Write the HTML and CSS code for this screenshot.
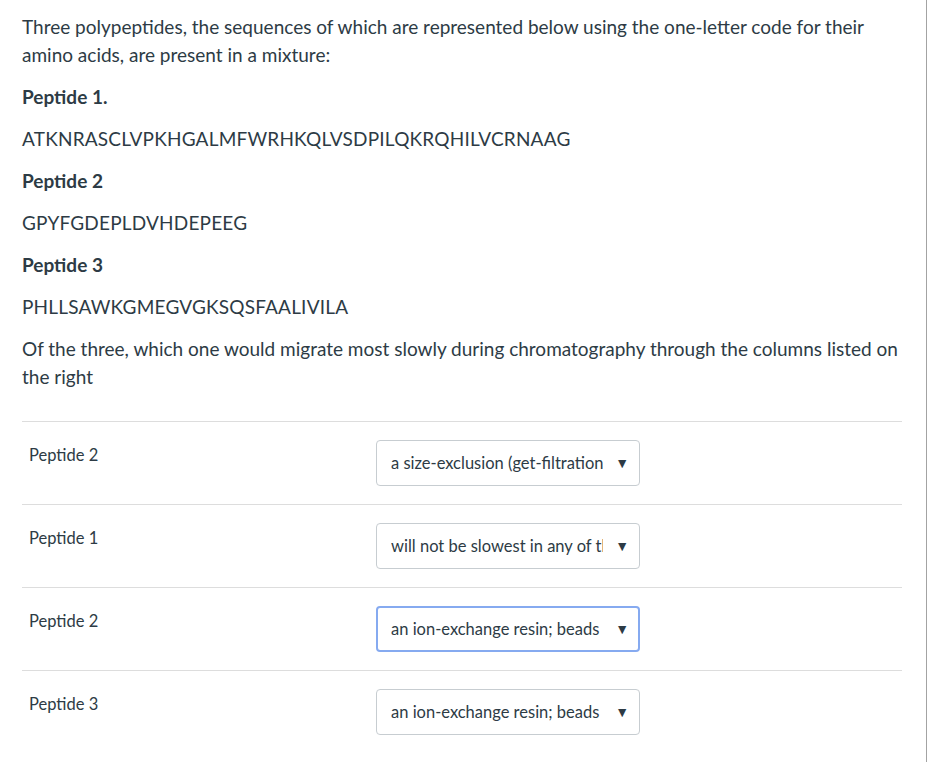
FILE: index.html
```html
<!DOCTYPE html>
<html>
<head>
<meta charset="utf-8">
<link rel="stylesheet" href="styles.css">
</head>
<body>
<div class="frame">
  <div class="content">
    <p>Three polypeptides, the sequences of which are represented below using the one-letter code for their amino acids, are present in a mixture:</p>
    <p class="bold">Peptide 1.</p>
    <p class="seq">ATKNRASCLVPKHGALMFWRHKQLVSDPILQKRQHILVCRNAAG</p>
    <p class="bold">Peptide 2</p>
    <p class="seq">GPYFGDEPLDVHDEPEEG</p>
    <p class="bold">Peptide 3</p>
    <p class="seq">PHLLSAWKGMEGVGKSQSFAALIVILA</p>
    <p>Of the three, which one would migrate most slowly during chromatography through the columns listed on the right</p>
    <div class="matches">
      <div class="row">
        <div class="label">Peptide 2</div>
        <div class="select"><span class="sel-text">a size-exclusion (get-filtration) column; beads</span><span class="arrow">▼</span></div>
      </div>
      <div class="row">
        <div class="label">Peptide 1</div>
        <div class="select"><span class="sel-text">will not be slowest in any of these columns</span><span class="arrow">▼</span></div>
      </div>
      <div class="row">
        <div class="label">Peptide 2</div>
        <div class="select focused"><span class="sel-text">an ion-exchange resin; beads</span><span class="arrow">▼</span></div>
      </div>
      <div class="row">
        <div class="label">Peptide 3</div>
        <div class="select"><span class="sel-text">an ion-exchange resin; beads</span><span class="arrow">▼</span></div>
      </div>
    </div>
  </div>
</div>
</body>
</html>
```

FILE: styles.css
```css
html, body {
  margin: 0;
  padding: 0;
  background: #fff;
}
body {
  font-family: Lato, "Open Sans", sans-serif;
  color: #2d3b45;
}
.frame {
  width: 927px;
  height: 762px;
  box-sizing: border-box;
  border-right: 1px solid #a3a3a3;
  overflow: hidden;
}
.content {
  width: 880px;
  padding: 13px 0 0 22px;
}
p {
  margin: 0 0 14px;
  font-size: 19px;
  line-height: 28px;
}
.seq {
  letter-spacing: 0.2px;
}
.bold {
  font-weight: 700;
}
.matches {
  margin-top: 30px;
}
.row {
  display: grid;
  grid-template-columns: 354px auto;
  align-items: start;
  border-top: 1px solid #ddd;
  padding: 18px 0;
}
.label {
  font-size: 16.5px;
  line-height: 24px;
  padding: 3px 0 0 7px;
}
.select {
  box-sizing: border-box;
  width: 264px;
  height: 46px;
  border: 1px solid #c7cdd1;
  border-radius: 4px;
  display: flex;
  align-items: center;
  padding-left: 14px;
  font-size: 16.5px;
  background: #fff;
}
.select.focused {
  border: 2px solid #86aaf0;
  padding-left: 13px;
}
.sel-text {
  width: 212px;
  overflow: hidden;
  white-space: nowrap;
}
.arrow {
  margin-left: auto;
  margin-right: 10px;
  font-size: 14px;
  line-height: 14px;
  color: #2d3b45;
}
.select.focused .arrow {
  margin-right: 9px;
}
```
